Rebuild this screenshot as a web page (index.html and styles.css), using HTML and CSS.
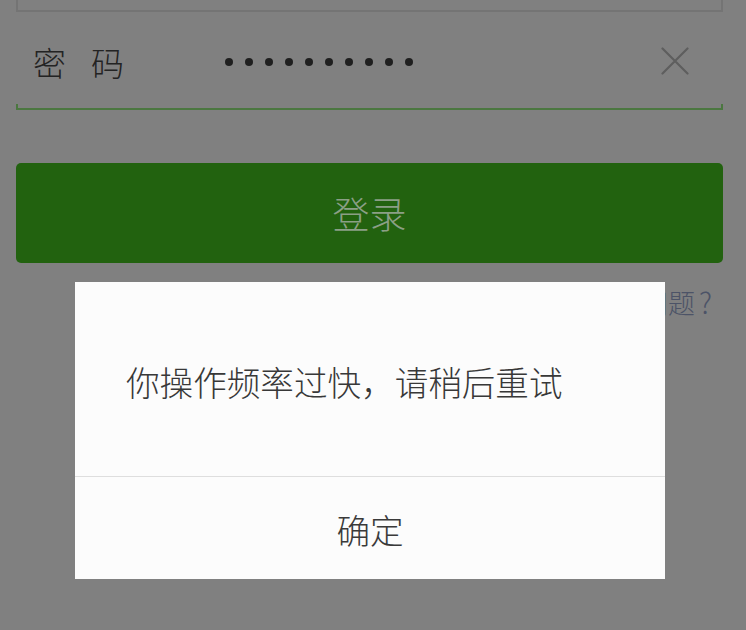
FILE: index.html
```html
<!DOCTYPE html>
<html lang="zh-CN">
<head>
<meta charset="utf-8">
<title>登录</title>
<link rel="stylesheet" href="styles.css">
</head>
<body>
<div class="page">
  <div class="underline underline-gray"></div>
  <div class="pwd-row">
    <span class="label">密码</span>
    <span class="dots">
      <i class="dot"></i><i class="dot"></i><i class="dot"></i><i class="dot"></i><i class="dot"></i>
      <i class="dot"></i><i class="dot"></i><i class="dot"></i><i class="dot"></i><i class="dot"></i>
    </span>
    <svg class="clear" width="28" height="28" viewBox="0 0 28 28">
      <path d="M1.5 1.5 L26.5 26.5 M26.5 1.5 L1.5 26.5" stroke="#5e5e5e" stroke-width="2.2" fill="none" stroke-linecap="round"/>
    </svg>
  </div>
  <div class="underline underline-green"></div>
  <div class="btn">登录</div>
  <div class="help">遇到问题<span class="q">?</span></div>
</div>

<div class="dialog">
  <div class="dialog-body">你操作频率过快，请稍后重试</div>
  <div class="dialog-btn">确定</div>
</div>
</body>
</html>
```

FILE: styles.css
```css
html, body {
  margin: 0;
  padding: 0;
}
body {
  width: 746px;
  height: 630px;
  overflow: hidden;
  background: #808080;
  font-family: "Noto Sans CJK SC", "Noto Sans", sans-serif;
  font-weight: 300;
  position: relative;
}
.page {
  padding: 0 23px 0 16px;
  display: flex;
  flex-direction: column;
}
.underline {
  box-sizing: border-box;
}
.underline-gray {
  height: 12px;
  border: 2px solid #747474;
  border-top: none;
}
.pwd-row {
  height: 92px;
  box-sizing: border-box;
  padding-top: 8px;
  display: flex;
  align-items: center;
}
.label {
  width: 192px;
  padding-left: 17px;
  font-size: 33px;
  line-height: 1;
  letter-spacing: 25px;
  color: #232323;
  white-space: nowrap;
}
.dots {
  display: flex;
  gap: 12px;
  align-items: center;
  height: 8px;
}
.dot {
  display: block;
  width: 8px;
  height: 8px;
  border-radius: 50%;
  background: #1f1f1f;
}
.clear {
  margin-left: auto;
  margin-right: 34px;
  margin-top: -2px;
}
.underline-green {
  height: 6px;
  border: 2px solid #4b7740;
  border-top: none;
}
.btn {
  margin-top: 53px;
  height: 100px;
  border-radius: 5px;
  background: #22620f;
  color: #8b9f86;
  font-size: 37px;
  display: flex;
  align-items: center;
  justify-content: center;
  line-height: 1;
}
.help {
  margin-top: 24px;
  align-self: flex-end;
  margin-right: 11px;
  font-size: 27px;
  line-height: 1;
  color: #4c5367;
  white-space: nowrap;
}
.q {
  padding-left: 4px;
  font-size: 29px;
}
.dialog {
  position: absolute;
  left: 75px;
  top: 282px;
  width: 590px;
  height: 297px;
  background: #fcfcfc;
  display: flex;
  flex-direction: column;
}
.dialog-body {
  height: 195px;
  box-sizing: border-box;
  border-bottom: 1px solid #dedede;
  padding: 6px 0 0 51px;
  display: flex;
  align-items: center;
  font-size: 33.6px;
  color: #383838;
  line-height: 1;
}
.dialog-btn {
  flex: 1;
  display: flex;
  align-items: center;
  justify-content: center;
  font-size: 33.6px;
  color: #3a3a3a;
  line-height: 1;
  padding-top: 3px;
}
```
